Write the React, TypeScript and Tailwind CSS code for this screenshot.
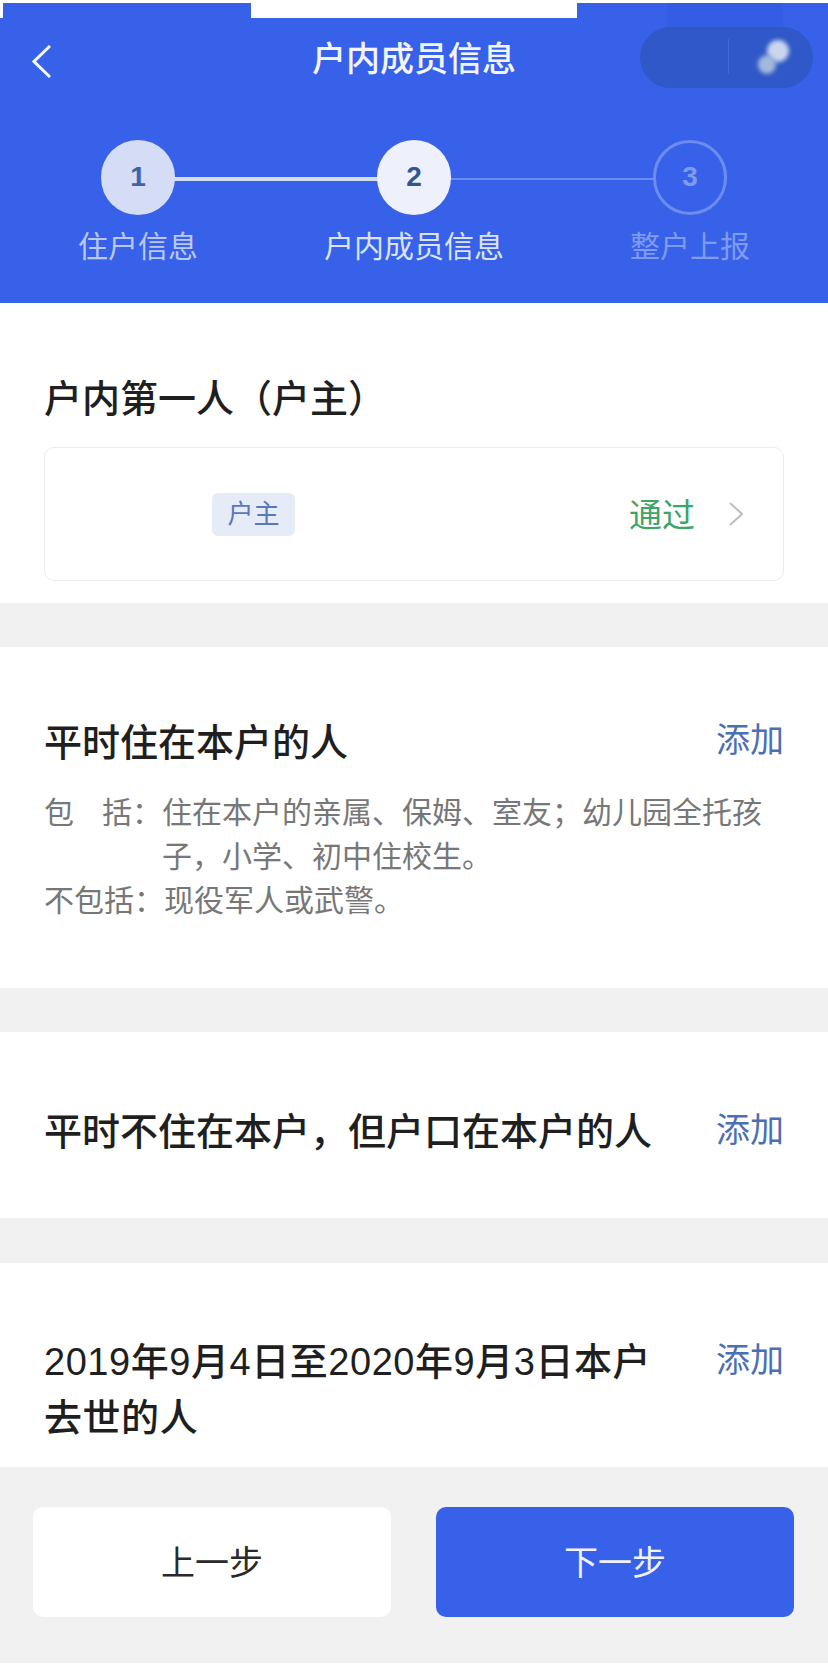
const FONT = "font-['Liberation_Sans','Noto_Sans_CJK_SC',sans-serif]";
const TITLE = "text-[38px] leading-[48px] font-medium text-[#1f1f1f]";
const ADD = "text-[34px] leading-[44px] text-[#4a6fb5]";

function Step({ n, label, state }: { n: number; label: string; state: "done" | "active" | "todo" }) {
  const circle =
    state === "done"
      ? "bg-[#d5dcf5] text-[#3f62a8]"
      : state === "active"
        ? "bg-[#eef1fb] text-[#34568f]"
        : "border-[3px] border-[#6d8cf0] text-[#7f9bf0]";
  const text = state === "done" ? "text-[#b9c8f7]" : state === "active" ? "text-[#dbe3fb]" : "text-[#7f9bf0]";
  return (
    <div className="relative z-10 flex w-[180px] flex-col items-center">
      <div className={`flex h-[75px] w-[74px] items-center justify-center rounded-full pb-[2px] text-[28px] font-bold ${circle}`}>{n}</div>
      <div className={`mt-[12px] text-[30px] leading-[40px] whitespace-nowrap ${text}`}>{label}</div>
    </div>
  );
}

function Divider({ h = "h-[44px]" }: { h?: string }) {
  return <div className={`${h} shrink-0 bg-[#f1f1f1]`} />;
}

export default function App() {
  return (
    <div className={`flex h-[1679px] w-[828px] flex-col overflow-hidden bg-white ${FONT}`}>
      {/* Header */}
      <div className="relative mt-[3px] h-[300px] shrink-0 bg-[#3761e9]">
        <div className="absolute top-[-3px] left-[251px] h-[18px] w-[326px] bg-white" />
        <div className="absolute top-0 left-0 h-[15px] w-[3px] bg-white" />
        <div className="absolute top-0 left-[667px] h-[25px] w-[116px] bg-[#335ee3]" />
        {/* Nav row */}
        <div className="grid h-[109px] grid-cols-[173px_1fr_173px] items-center px-[15px]">
          <svg className="mt-[7px] ml-[17px]" width="19" height="33" viewBox="0 0 19 33" fill="none" stroke="#f4f6ff" strokeWidth="3">
            <path d="M18 1 L2 16.5 L18 32" />
          </svg>
          <div className="pt-[4px] text-center text-[34px] font-medium text-[#f2f5ff]">户内成员信息</div>
          <div className="relative h-[61px] w-[173px] rounded-full bg-[#3058c8]">
            <div className="absolute top-[12px] left-[88px] h-[35px] w-px bg-[#4468d6]" />
            <div className="absolute top-[13px] left-[127px] h-[22px] w-[22px] rounded-full bg-[#c9d7ee] blur-[2px]" />
            <div className="absolute top-[28px] left-[118px] h-[19px] w-[18px] rounded-full bg-[#a3b9dc] blur-[2px]" />
          </div>
        </div>
        {/* Steps */}
        <div className="relative mx-auto mt-[28px] flex w-[732px] justify-between">
          <div className="absolute top-[37px] left-[90px] h-[4px] w-[276px] bg-[#d5dcf5]" />
          <div className="absolute top-[38px] left-[366px] h-[2px] w-[239px] bg-[#6d8cf0]" />
          <Step n={1} label="住户信息" state="done" />
          <Step n={2} label="户内成员信息" state="active" />
          <Step n={3} label="整户上报" state="todo" />
        </div>
      </div>

      {/* Head of household */}
      <div className="h-[300px] shrink-0 px-[44px] pt-[72px]">
        <div className={TITLE}>户内第一人（户主）</div>
        <div className="mt-[24px] flex h-[134px] items-center rounded-[10px] border border-[#ececec] pr-[40px] pl-[167px]">
          <div className="flex h-[43px] w-[83px] items-center justify-center rounded-[6px] bg-[#e6ebf8] text-[26px] text-[#5a78b8]">户主</div>
          <div className="ml-auto pt-[3px] text-[33px] text-[#3da565]">通过</div>
          <svg className="ml-[34px]" width="14" height="24" viewBox="0 0 14 24" fill="none" stroke="#bdbdbd" strokeWidth="2">
            <path d="M1 1 L13 12 L1 23" />
          </svg>
        </div>
      </div>
      <Divider />

      {/* Residents */}
      <div className="h-[341px] shrink-0 px-[44px] pt-[71px]">
        <div className="flex items-start justify-between">
          <div className={`mt-[1px] ${TITLE}`}>平时住在本户的人</div>
          <div className={ADD}>添加</div>
        </div>
        <div className="mt-[24px] text-[30px] leading-[44px] text-[#777]">
          <div className="flex">
            <div className="w-[58px] shrink-0">包</div>
            <div className="w-[60px] shrink-0">括：</div>
            <div className="flex-1">住在本户的亲属、保姆、室友；幼儿园全托孩子，小学、初中住校生。</div>
          </div>
          <div className="flex">
            <div className="w-[120px] shrink-0">不包括：</div>
            <div>现役军人或武警。</div>
          </div>
        </div>
      </div>
      <Divider />

      {/* Not living here */}
      <div className="flex h-[186px] shrink-0 items-start justify-between px-[44px] pt-[76px]">
        <div className={TITLE}>平时不住在本户，但户口在本户的人</div>
        <div className={ADD}>添加</div>
      </div>
      <Divider h="h-[45px]" />

      {/* Deceased */}
      <div className="flex h-[204px] shrink-0 items-start justify-between px-[44px] pt-[71px]">
        <div className={`w-[610px] tracking-[0.55px] ${TITLE} leading-[56px]`}>2019年9月4日至2020年9月3日本户去世的人</div>
        <div className={`mt-[4px] ${ADD}`}>添加</div>
      </div>

      {/* Footer */}
      <div className="flex h-[196px] shrink-0 gap-[45px] bg-[#f1f1f1] pt-[40px] pr-[34px] pl-[33px]">
        <div className="flex h-[110px] flex-1 items-center justify-center rounded-[10px] bg-white pt-[3px] text-[34px] text-[#2a2a2a]">上一步</div>
        <div className="flex h-[110px] flex-1 items-center justify-center rounded-[10px] bg-[#3761e9] pt-[3px] text-[34px] text-[#eef2ff]">下一步</div>
      </div>
      <div className="h-[16px] bg-white" />
    </div>
  );
}
